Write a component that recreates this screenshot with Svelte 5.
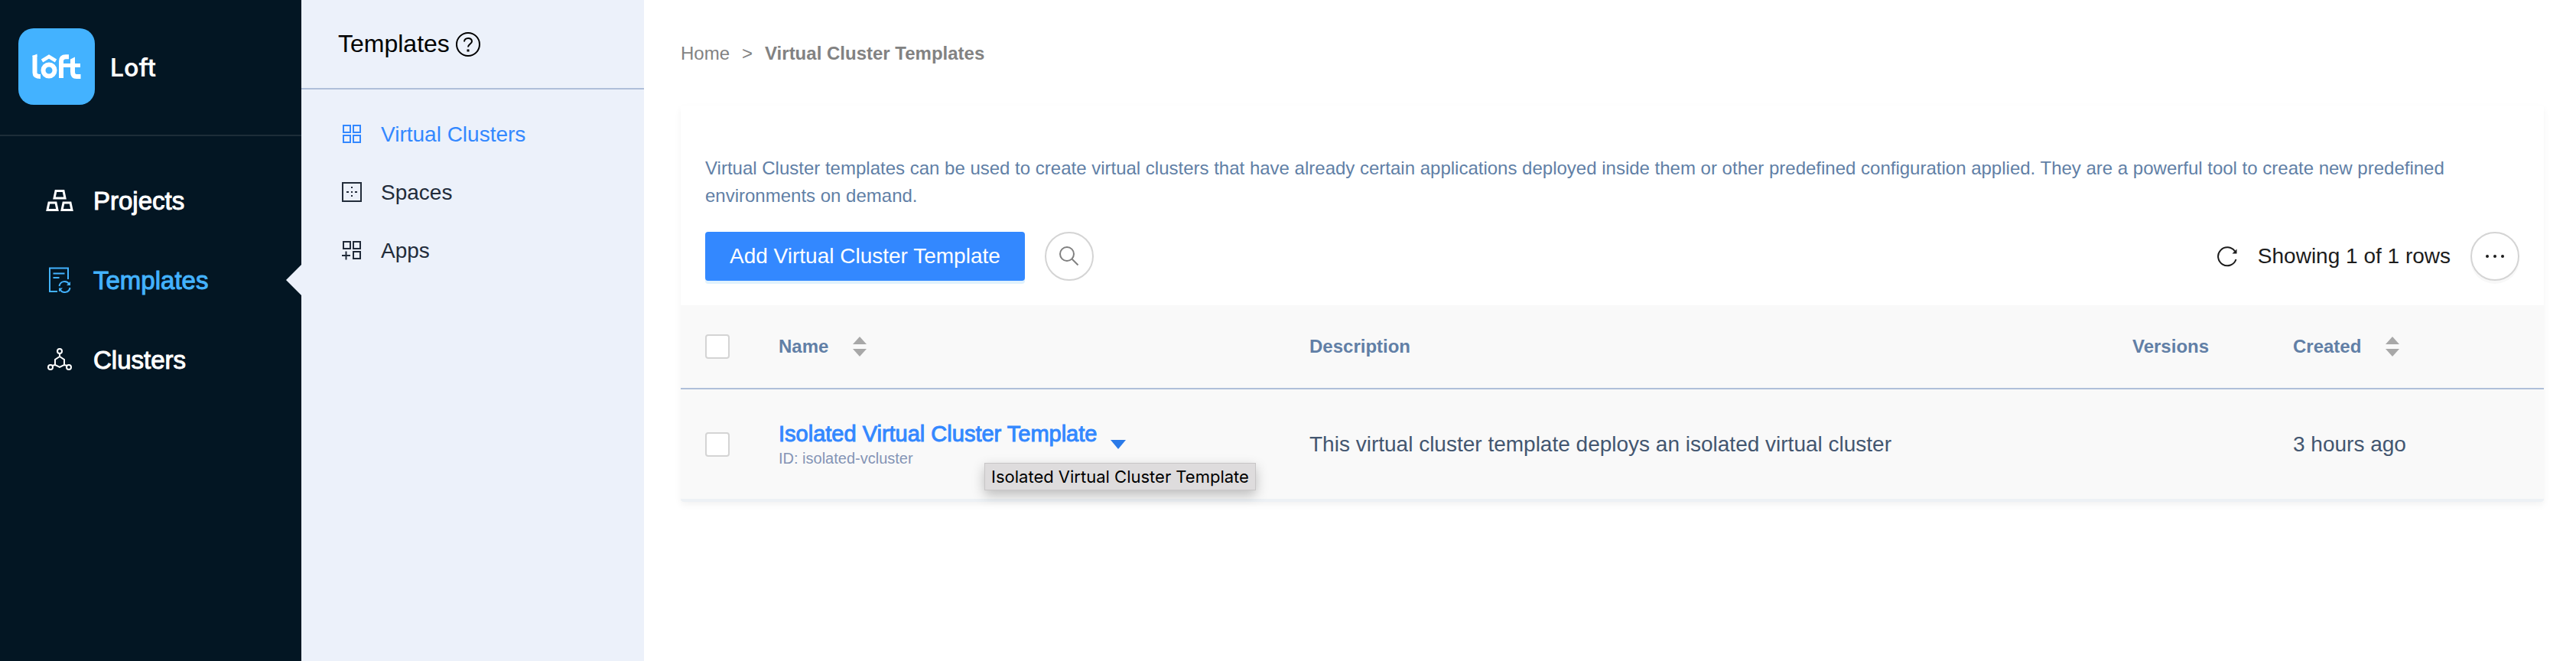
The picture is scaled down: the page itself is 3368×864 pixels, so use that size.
<!--
  Virtual cluster templates
  Main navigation, templates submenu and the template table
-->
<script lang="ts">
  const navItems = [
    { id: 'projects', label: 'Projects' },
    { id: 'templates', label: 'Templates' },
    { id: 'clusters', label: 'Clusters' },
  ];

  const subItems = [
    { id: 'vclusters', label: 'Virtual Clusters' },
    { id: 'spaces', label: 'Spaces' },
    { id: 'apps', label: 'Apps' },
  ];

  const templates = [
    {
      id: 'isolated-vcluster',
      name: 'Isolated Virtual Cluster Template',
      description: 'This virtual cluster template deploys an isolated virtual cluster',
      versions: '',
      created: '3 hours ago',
    },
  ];

  let activeNav = $state('templates');
  let activeSub = $state('vclusters');
  let selected: string[] = $state([]);
  let allSelected = $derived(selected.length === templates.length);

  function toggleAll() {
    selected = allSelected ? [] : templates.map((t) => t.id);
  }
</script>

{#snippet sorter()}
  <svg class="sorter" viewBox="0 0 18 26" fill="currentColor" aria-hidden="true">
    <path d="M9 0l9 10H0z" />
    <path d="M9 26l9-10H0z" />
  </svg>
{/snippet}

<div class="layout">
  <aside class="sidebar">
    <div class="brand">
      <svg class="logo" viewBox="0 0 100 100" fill="none" stroke="#fff" stroke-width="6" aria-hidden="true">
        <rect width="100" height="100" rx="20" fill="#43b2ff" stroke="none" />
        <path d="M21.500 35.500V58Q21.500 63 29 63" />
        <path d="M18.500 37v-1l6-2.500v3.500z" fill="#fff" stroke="none" />
        <circle cx="40" cy="55" r="7.500" />
        <path d="M31 42.500l9-5.500 9 5.500" stroke-width="4.500" />
        <path d="M56 65V43Q56 37.200 62 37.200H66" />
        <path d="M56 48.500H81" stroke-width="5" />
        <path d="M71 41V57Q71 63 76 63H81.500" />
        <path d="M68 42v-1.500l6-3v4.500z" fill="#fff" stroke="none" />
      </svg>
      <span class="brand-name">Loft</span>
    </div>
    <nav class="nav">
      {#each navItems as item}
        <a
          href="#{item.id}"
          class="nav-item"
          class:active={activeNav === item.id}
          onclick={() => (activeNav = item.id)}
        >
          <svg viewBox="0 0 36 36" fill="none" stroke="currentColor" stroke-width="3" aria-hidden="true">
            {#if item.id === 'projects'}
              <path d="M13 5.500h10l2 9.500H11z" />
              <path d="M4 21h9l2 9.500H2z" />
              <path d="M23 21h9l2 9.500H21z" />
            {:else if item.id === 'templates'}
              <path d="M15 33H5V2.500H29V17" stroke-width="2" />
              <path d="M9.500 9.500h15M9.500 15h8" stroke-width="2" />
              <path d="M17.500 26a7 7 0 0 1 13-2.500M31.500 28a7 7 0 0 1-13 2.500" stroke-width="2" />
              <path d="M32 20v5h-5zM17 33.500v-5h5z" fill="currentColor" stroke="none" />
            {:else}
              <circle cx="18" cy="7" r="3" stroke-width="2" />
              <circle cx="6" cy="28" r="3" stroke-width="2" />
              <circle cx="30" cy="28" r="3" stroke-width="2" />
              <path d="M18 10v4l6 4v7l-6 3-6-3v-7l6-4M12 25l-4 1M24 25l4 1" stroke-width="2" />
            {/if}
          </svg>
          <span>{item.label}</span>
        </a>
      {/each}
    </nav>
  </aside>

  <aside class="submenu">
    <header class="submenu-header">
      <h1>Templates</h1>
      <button class="help" aria-label="Help">
        <svg viewBox="0 0 32 32" fill="none" stroke="currentColor" stroke-width="2" aria-hidden="true">
          <circle cx="16" cy="16" r="15" />
          <path d="M11 12.500c0-6 10-6 10-0.500 0 3.500-5 3.500-5 7.500" />
          <path d="M14.500 22.500h3v3h-3z" fill="currentColor" stroke="none" />
        </svg>
      </button>
    </header>
    <nav class="submenu-nav">
      {#each subItems as item}
        <a
          href="#{item.id}"
          class="submenu-item"
          class:active={activeSub === item.id}
          onclick={() => (activeSub = item.id)}
        >
          <svg viewBox="0 0 28 28" fill="none" stroke="currentColor" stroke-width="2" aria-hidden="true">
            {#if item.id === 'spaces'}
              <rect x="2" y="2" width="24" height="24" />
              <path d="M13 7h2v2h-2zM13 13h2v2h-2zM13 18h2v2h-2zM7 13h3v2H7zM18 13h3v2h-3z" fill="currentColor" stroke="none" />
            {:else}
              <rect x="3" y="3" width="9" height="9" />
              <rect x="16" y="3" width="9" height="9" />
              <rect x="16" y="16" width="9" height="9" />
              {#if item.id === 'apps'}
                <path d="M6.500 15.500v11M1 21h11" />
              {:else}
                <rect x="3" y="16" width="9" height="9" />
              {/if}
            {/if}
          </svg>
          <span>{item.label}</span>
        </a>
      {/each}
    </nav>
  </aside>

  <main class="content">
    <nav class="breadcrumb" aria-label="Breadcrumb">
      <a href="#home">Home</a>
      <span>&gt;</span>
      <strong>Virtual Cluster Templates</strong>
    </nav>

    <section class="card">
      <p class="intro">
        Virtual Cluster templates can be used to create virtual clusters that have already certain applications deployed
        inside them or other predefined configuration applied. They are a powerful tool to create new predefined
        environments on demand.
      </p>

      <div class="toolbar">
        <button class="primary">Add Virtual Cluster Template</button>
        <button class="round search" aria-label="Search">
          <svg viewBox="0 0 28 28" fill="none" stroke="currentColor" stroke-width="2" aria-hidden="true">
            <circle cx="11" cy="11" r="9" />
            <path d="M17.500 17.500l8 8" />
          </svg>
        </button>
        <div class="toolbar-right">
          <button class="reload" aria-label="Reload">
            <svg viewBox="0 0 28 28" fill="none" stroke="currentColor" stroke-width="2" aria-hidden="true">
              <path d="M25.500 18a12 12 0 1 1-1.500-10.500" />
              <path d="M26.500 4.500v6h-6z" fill="currentColor" stroke="none" />
            </svg>
          </button>
          <span>Showing 1 of 1 rows</span>
          <button class="round more" aria-label="More actions">
            <svg viewBox="0 0 28 28" fill="currentColor" aria-hidden="true">
              <circle cx="4" cy="14" r="2" />
              <circle cx="14" cy="14" r="2" />
              <circle cx="24" cy="14" r="2" />
            </svg>
          </button>
        </div>
      </div>

      <table>
        <colgroup>
          <col class="col-check" />
          <col class="col-name" />
          <col />
          <col class="col-versions" />
          <col class="col-created" />
        </colgroup>
        <thead>
          <tr>
            <th><input type="checkbox" aria-label="Select all" checked={allSelected} onchange={toggleAll} /></th>
            <th><span class="sortable">Name {@render sorter()}</span></th>
            <th>Description</th>
            <th>Versions</th>
            <th><span class="sortable">Created {@render sorter()}</span></th>
          </tr>
        </thead>
        <tbody>
          {#each templates as template}
            <tr>
              <td><input type="checkbox" aria-label="Select {template.name}" value={template.id} bind:group={selected} /></td>
              <td>
                <div class="name-cell">
                  <div class="name-text">
                    <a href="#{template.id}">{template.name}</a>
                    <small>ID: {template.id}</small>
                  </div>
                  <button class="expand" aria-label="Show details">
                    <svg viewBox="0 0 20 12" fill="currentColor" aria-hidden="true"><path d="M0 0h20L10 12z" /></svg>
                  </button>
                  <span class="tooltip" role="tooltip">{template.name}</span>
                </div>
              </td>
              <td>{template.description}</td>
              <td>{template.versions}</td>
              <td>{template.created}</td>
            </tr>
          {/each}
        </tbody>
      </table>
    </section>
  </main>
</div>

<style>
  :global(body) {
    margin: 0;
    background: #fff;
  }

  .layout {
    display: flex;
    min-height: 100vh;
    font-family: 'Liberation Sans', Arial, sans-serif;
    font-size: 28px;
    color: #435670;
  }

  a {
    color: inherit;
    text-decoration: none;
  }

  button {
    display: flex;
    align-items: center;
    justify-content: center;
    padding: 0;
    border: none;
    background: none;
    font: inherit;
    color: inherit;
    cursor: pointer;
  }

  svg {
    display: block;
    flex: none;
  }

  .sidebar {
    flex: none;
    width: 394px;
    background: #031623;
    color: #fff;
  }

  .brand {
    display: flex;
    align-items: center;
    gap: 20px;
    padding: 37px 24px 39px;
    border-bottom: 2px solid #1d2d38;
  }

  .logo {
    width: 100px;
    height: 100px;
  }

  .brand-name {
    padding-top: 2px;
    font-family: Inter, sans-serif;
    font-size: 32px;
    font-weight: 600;
  }

  .nav {
    padding-top: 32px;
  }

  .nav-item {
    position: relative;
    display: flex;
    align-items: center;
    gap: 26px;
    height: 104px;
    padding-left: 60px;
    font-size: 33px;
    -webkit-text-stroke: 1px currentColor;
  }

  .nav-item span,
  .submenu-item span {
    padding-top: 2px;
  }

  .nav-item svg {
    width: 36px;
    height: 36px;
  }

  .nav-item.active {
    color: #43b2ff;
  }

  .nav-item.active::after {
    content: '';
    position: absolute;
    top: 32px;
    right: 0;
    border: 20px solid transparent;
    border-right-color: #ecf1fa;
    border-left: none;
  }

  .submenu {
    flex: none;
    width: 448px;
    background: #ecf1fa;
    color: #222c3a;
  }

  .submenu-header {
    display: flex;
    align-items: center;
    gap: 8px;
    height: 115px;
    padding-left: 48px;
    border-bottom: 2px solid #afbfd9;
    color: #000;
  }

  .submenu-header h1 {
    margin: 0;
    font-size: 32px;
    font-weight: 400;
  }

  .help svg {
    width: 32px;
    height: 32px;
  }

  .submenu-nav {
    padding-top: 20px;
  }

  .submenu-item {
    display: flex;
    align-items: center;
    gap: 24px;
    height: 76px;
    padding-left: 52px;
  }

  .submenu-item svg {
    width: 28px;
    height: 28px;
  }

  .submenu-item.active {
    color: #3388ff;
  }

  .content {
    flex: 1;
    min-width: 0;
    padding: 52px 42px 48px 48px;
  }

  .breadcrumb {
    display: flex;
    gap: 16px;
    margin-bottom: 50px;
    font-size: 24px;
    line-height: 36px;
    color: #828282;
  }

  .card {
    border-bottom: 4px solid #edf1f5;
    border-radius: 4px;
    background: #fff;
    box-shadow: 0 4px 10px rgba(0, 0, 0, 0.05);
  }

  .intro {
    margin: 0;
    padding: 64px 32px 29px;
    font-size: 24px;
    line-height: 36px;
    color: #617fa6;
  }

  .toolbar {
    display: flex;
    align-items: center;
    gap: 26px;
    padding: 0 32px 32px;
  }

  .primary {
    height: 64px;
    padding: 0 32px;
    border-radius: 4px;
    background: #3388ff;
    box-shadow: 0 4px 0 #e1f2fd;
    color: #fff;
  }

  .round {
    width: 64px;
    height: 64px;
    box-sizing: border-box;
    border: 2px solid #d4d4d4;
    border-radius: 50%;
    background: #fff;
  }

  .round svg,
  .reload svg {
    width: 28px;
    height: 28px;
  }

  .search {
    color: #808080;
  }

  .more {
    box-shadow: 0 4px 0 #f8f8f8;
  }

  .toolbar-right {
    display: flex;
    align-items: center;
    gap: 26px;
    margin-left: auto;
    color: #1c1c1c;
  }

  table {
    width: 100%;
    border-collapse: collapse;
    table-layout: fixed;
    background: #f9f9f9;
  }

  .col-check {
    width: 112px;
  }

  .col-name {
    width: 694px;
  }

  .col-versions {
    width: 210px;
  }

  .col-created {
    width: 344px;
  }

  th,
  td {
    padding: 0 16px;
    text-align: left;
    vertical-align: middle;
  }

  th:first-child,
  td:first-child {
    padding-left: 32px;
  }

  th {
    height: 108px;
    border-bottom: 2px solid #afbfd9;
    font-size: 24px;
    color: #617fa6;
  }

  td {
    height: 143px;
  }

  input[type='checkbox'] {
    display: block;
    width: 32px;
    height: 32px;
    margin: 0;
    appearance: none;
    border: 2px solid #d4d4d4;
    border-radius: 4px;
    background: #fff;
  }

  input[type='checkbox']:checked {
    border-color: #3388ff;
    background: #3388ff;
  }

  .sortable {
    display: flex;
    align-items: center;
    gap: 32px;
  }

  .sorter {
    width: 18px;
    height: 26px;
    color: #a8a8a8;
  }

  .name-cell {
    position: relative;
    display: flex;
    align-items: center;
    gap: 18px;
  }

  .name-text {
    display: flex;
    flex-direction: column;
  }

  .name-text a {
    font-size: 29px;
    line-height: 36px;
    color: #3388ff;
    -webkit-text-stroke: 1px currentColor;
  }

  .name-text small {
    font-size: 20px;
    line-height: 28px;
    color: #8494b5;
  }

  .expand {
    color: #2a7ae8;
  }

  .expand svg {
    width: 20px;
    height: 12px;
  }

  .tooltip {
    position: absolute;
    top: 56px;
    left: 269px;
    padding: 0 8px;
    border: 1px solid #c8c6c7;
    background: #dedcdd;
    box-shadow: 0 6px 16px rgba(0, 0, 0, 0.25);
    font-family: Inter, sans-serif;
    font-size: 22px;
    line-height: 34px;
    color: #000;
    white-space: nowrap;
  }
</style>
